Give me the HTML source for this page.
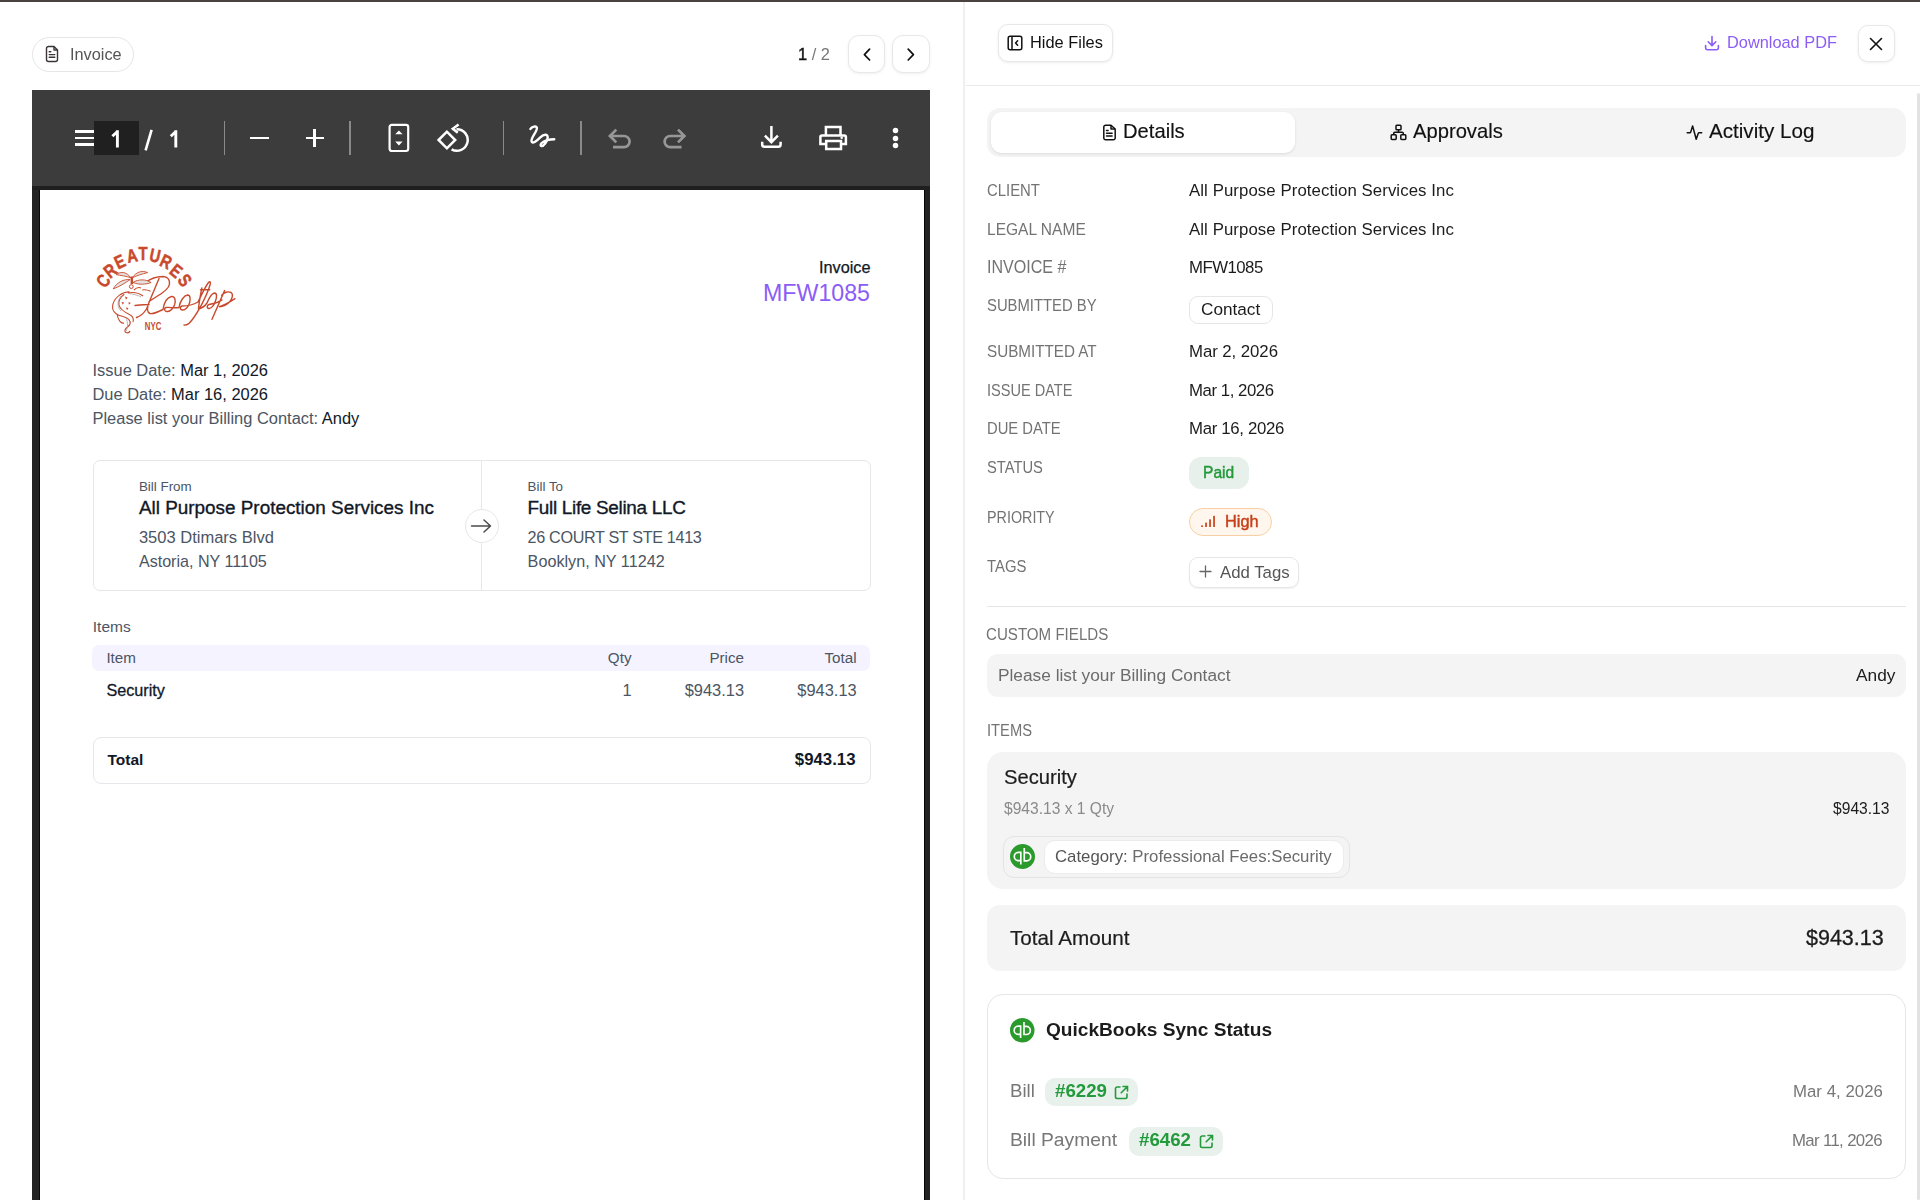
<!DOCTYPE html>
<html><head><meta charset="utf-8"><title>Invoice</title>
<style>
html,body{margin:0;padding:0;width:1920px;height:1200px;overflow:hidden;background:#fff;position:relative}
.t{position:absolute;white-space:nowrap;line-height:1;font-family:"Liberation Sans", sans-serif}
.r{position:absolute;display:block}
</style></head><body>
<div class="r" style="left:0px;top:0px;width:1920px;height:2px;background:#4a4240"></div>
<div class="r" style="left:963px;top:2px;width:2px;height:1198px;background:#eff0ef"></div>
<div class="r" style="left:32px;top:37px;width:102px;height:35px;border:1px solid #e6e6e6;border-radius:18px;box-sizing:border-box;background:#fff"></div>
<svg class="r" style="left:44px;top:45px;" width="16" height="18" viewBox="0 0 16 18" fill="none"><path d="M10 1.5H4.5a2 2 0 0 0-2 2v11a2 2 0 0 0 2 2h7a2 2 0 0 0 2-2V5z" stroke="#3b3535" stroke-width="1.4" stroke-linejoin="round"/><path d="M10 1.5V5h3.5" stroke="#3b3535" stroke-width="1.4" stroke-linejoin="round"/><path d="M5.2 6.8h1.6M5.2 9.6h5.6M5.2 12.3h5.6" stroke="#3b3535" stroke-width="1.4" stroke-linecap="round"/></svg>
<div class="t" style="top:46.00px;font-size:16.3px;color:#555;font-weight:400;left:69.50px;will-change:transform;">Invoice</div>
<div class="t" style="top:46.00px;font-size:16.4px;color:#777;font-weight:400;left:798.00px;will-change:transform;"><span style="color:#111;-webkit-text-stroke:0.4px #111">1</span> <span style="color:#777">/ 2</span></div>
<div class="r" style="left:847.5px;top:35px;width:37.5px;height:37.5px;border:1px solid #e8e8e8;border-radius:11px;box-sizing:border-box;background:#fff;box-shadow:0 1px 3px rgba(0,0,0,.06)"></div>
<div class="r" style="left:892px;top:35px;width:37.5px;height:37.5px;border:1px solid #e8e8e8;border-radius:11px;box-sizing:border-box;background:#fff;box-shadow:0 1px 3px rgba(0,0,0,.06)"></div>
<svg class="r" style="left:862px;top:47px;" width="10" height="15" viewBox="0 0 10 15" fill="none"><path d="M7.6 2.2 2.4 7.6 7.6 13" stroke="#111" stroke-width="1.7" stroke-linecap="round" stroke-linejoin="round"/></svg>
<svg class="r" style="left:906px;top:47px;" width="10" height="15" viewBox="0 0 10 15" fill="none"><path d="M2.2 2.2 7.4 7.6 2.2 13" stroke="#111" stroke-width="1.7" stroke-linecap="round" stroke-linejoin="round"/></svg>
<div class="r" style="left:32px;top:90px;width:898px;height:1110px;background:#232323"></div>
<div class="r" style="left:32px;top:90px;width:898px;height:96px;background:#3c3c3c"></div>
<div class="r" style="left:32px;top:186px;width:898px;height:4px;background:#1f1f1f"></div>
<div class="r" style="left:38.5px;top:190px;width:1.5px;height:1010px;background:#0a0a0a"></div>
<div class="r" style="left:924px;top:190px;width:1.2px;height:1010px;background:#050505"></div>
<div class="r" style="left:40px;top:190px;width:884px;height:1010px;background:#fff"></div>
<div class="r" style="left:74.7px;top:130px;width:19.5px;height:2.6px;background:#fff"></div>
<div class="r" style="left:74.7px;top:136.5px;width:19.5px;height:2.6px;background:#fff"></div>
<div class="r" style="left:74.7px;top:143px;width:19.5px;height:2.6px;background:#fff"></div>
<div class="r" style="left:94px;top:121px;width:45px;height:34px;background:#202020"></div>
<svg class="r" style="left:100px;top:120px;" width="90" height="36" viewBox="100 120 90 36" fill="none"><path d="M112.4 136.3 117.2 131.8M117.4 130.2V147.5M170.8 136.3 175.6 131.8M175.8 130.2V147.5" stroke="#fff" stroke-width="2.9" stroke-linecap="butt"/><path d="M145.6 150.3 151.6 129.9" stroke="#fff" stroke-width="2.6"/></svg>
<div class="r" style="left:223.5px;top:121px;width:1.6px;height:34px;background:#8a8a8a"></div>
<div class="r" style="left:349.3px;top:121px;width:1.6px;height:34px;background:#8a8a8a"></div>
<div class="r" style="left:502.6px;top:121px;width:1.6px;height:34px;background:#8a8a8a"></div>
<div class="r" style="left:580.3px;top:121px;width:1.6px;height:34px;background:#8a8a8a"></div>
<div class="r" style="left:250px;top:137px;width:18.5px;height:2.2px;background:#fff"></div>
<div class="r" style="left:305.5px;top:137px;width:18px;height:2.2px;background:#fff"></div>
<div class="r" style="left:313.4px;top:129.3px;width:2.2px;height:18px;background:#fff"></div>
<svg class="r" style="left:386px;top:122px;" width="26" height="32" viewBox="0 0 26 32" fill="none"><rect x="3.6" y="2.8" width="18.6" height="26.2" rx="2.2" stroke="#fff" stroke-width="2.2"/><path d="M9.2 12.2 12.9 8.4 16.6 12.2z M9.2 19.6 12.9 23.4 16.6 19.6z" fill="#fff"/></svg>
<svg class="r" style="left:436px;top:122px;" width="34" height="32" viewBox="0 0 34 32" fill="none"><path d="M2.6 18 10.9 9.7 19.2 18 10.9 26.3z" stroke="#fff" stroke-width="2.5" stroke-linejoin="miter"/><path d="M20.5 7.2A10.8 10.8 0 1 1 15.6 27.4" stroke="#fff" stroke-width="2.5" fill="none"/><path d="M22.6 2.6 16.8 6.8 21.8 10.8" stroke="#fff" stroke-width="2.5" fill="none"/></svg>
<svg class="r" style="left:528px;top:124px;" width="28" height="28" viewBox="0 0 28 28" fill="none"><path d="M2.4 5C3.6 2.6 8.6 1.2 8.9 4C9.3 7.2 3 13.6 3.5 17.2C4 20.8 9.6 16.2 12.6 13.2C15.6 10.2 19.8 9.6 19.7 13.2C19.6 17.4 15.2 23 13.2 22C11 20.9 14.6 15.6 26.2 15.3" stroke="#fff" stroke-width="2.4" stroke-linecap="round" stroke-linejoin="round" fill="none"/></svg>
<svg class="r" style="left:600px;top:118px;" width="100" height="40" viewBox="600 118 100 40" fill="none"><path d="M616.3 129.6 609.9 136 616.3 142.4M610.5 136H624A5.6 5.6 0 0 1 624 147.2H613" stroke="#979797" stroke-width="2.7" fill="none"/><path d="M678 129.6 684.4 136 678 142.4M683.8 136H670.2A5.6 5.6 0 0 0 670.2 147.2H681.5" stroke="#979797" stroke-width="2.7" fill="none"/></svg>
<svg class="r" style="left:759px;top:124px;" width="26" height="28" viewBox="0 0 26 28" fill="none"><path d="M12.4 1.9V18.2M5.9 11.7 12.4 18.2 18.9 11.7" stroke="#fff" stroke-width="2.5" fill="none"/><path d="M3.2 17.8v2.6a2.3 2.3 0 0 0 2.3 2.3h13.8a2.3 2.3 0 0 0 2.3-2.3v-2.6" stroke="#fff" stroke-width="2.5" fill="none"/></svg>
<svg class="r" style="left:817px;top:123px;" width="32" height="30" viewBox="0 0 32 30" fill="none"><path d="M8.9 12V4.1H23.5V12" stroke="#fff" stroke-width="2.5" fill="none"/><path d="M8.2 20.9H3.4V14a1.6 1.6 0 0 1 1.6-1.6H27.3a1.6 1.6 0 0 1 1.6 1.6v6.9H24.2" stroke="#fff" stroke-width="2.5" fill="none"/><rect x="9.2" y="18" width="14.8" height="8" stroke="#fff" stroke-width="2.5"/><circle cx="24.7" cy="14.8" r="1.3" fill="#fff"/></svg>
<svg class="r" style="left:892px;top:126.80000000000001px;" width="7" height="7" viewBox="0 0 7 7" fill="none"><circle cx="3.5" cy="3.5" r="2.75" fill="#fff"/></svg>
<svg class="r" style="left:892px;top:134.6px;" width="7" height="7" viewBox="0 0 7 7" fill="none"><circle cx="3.5" cy="3.5" r="2.75" fill="#fff"/></svg>
<svg class="r" style="left:892px;top:142.4px;" width="7" height="7" viewBox="0 0 7 7" fill="none"><circle cx="3.5" cy="3.5" r="2.75" fill="#fff"/></svg>
<svg class="r" style="left:85px;top:235px;" width="160" height="105" viewBox="85 235 160 105" fill="none">
<text x="0" y="0" transform="translate(103.5,281) rotate(-51.9) scale(0.8,1)" text-anchor="middle" dominant-baseline="central" font-family="Liberation Sans" font-weight="700" font-size="18.5" fill="#c9492c" stroke="#c9492c" stroke-width="0.5">C</text>
<text x="0" y="0" transform="translate(110.5,271) rotate(-38.4) scale(0.8,1)" text-anchor="middle" dominant-baseline="central" font-family="Liberation Sans" font-weight="700" font-size="18.5" fill="#c9492c" stroke="#c9492c" stroke-width="0.5">R</text>
<text x="0" y="0" transform="translate(120,262) rotate(-24.7) scale(0.8,1)" text-anchor="middle" dominant-baseline="central" font-family="Liberation Sans" font-weight="700" font-size="18.5" fill="#c9492c" stroke="#c9492c" stroke-width="0.5">E</text>
<text x="0" y="0" transform="translate(132,256) rotate(-11.1) scale(0.8,1)" text-anchor="middle" dominant-baseline="central" font-family="Liberation Sans" font-weight="700" font-size="18.5" fill="#c9492c" stroke="#c9492c" stroke-width="0.5">A</text>
<text x="0" y="0" transform="translate(143,254) rotate(0.0) scale(0.8,1)" text-anchor="middle" dominant-baseline="central" font-family="Liberation Sans" font-weight="700" font-size="18.5" fill="#c9492c" stroke="#c9492c" stroke-width="0.5">T</text>
<text x="0" y="0" transform="translate(155,256) rotate(12.1) scale(0.8,1)" text-anchor="middle" dominant-baseline="central" font-family="Liberation Sans" font-weight="700" font-size="18.5" fill="#c9492c" stroke="#c9492c" stroke-width="0.5">U</text>
<text x="0" y="0" transform="translate(166,262) rotate(24.7) scale(0.8,1)" text-anchor="middle" dominant-baseline="central" font-family="Liberation Sans" font-weight="700" font-size="18.5" fill="#c9492c" stroke="#c9492c" stroke-width="0.5">R</text>
<text x="0" y="0" transform="translate(176,271) rotate(38.8) scale(0.8,1)" text-anchor="middle" dominant-baseline="central" font-family="Liberation Sans" font-weight="700" font-size="18.5" fill="#c9492c" stroke="#c9492c" stroke-width="0.5">E</text>
<text x="0" y="0" transform="translate(184.5,280.5) rotate(52.8) scale(0.8,1)" text-anchor="middle" dominant-baseline="central" font-family="Liberation Sans" font-weight="700" font-size="18.5" fill="#c9492c" stroke="#c9492c" stroke-width="0.5">S</text>
<path d="M145.5 282.5 C 150 279, 157 276.5, 163 276.5 C 168 276.7, 170 280, 169.5 284 C 169 289, 162 293.5, 156 297 C 153 299, 150.5 300.5, 149 301.5 M159 278.5 C 156 286, 151 297, 148.5 304 C 147 308, 147 312, 150 313.5 C 153 314.5, 158 312, 163 309.5 M136.5 317.5 C 140 316.5, 144 313, 146.5 309 C 147.5 307, 148 305.5, 148.5 304 M135 305.5 C 140 305, 145 304.5, 149 304.5 M163 309.5 C 164 303, 167 297.5, 171.5 296.5 C 175 296, 176 300, 174.5 305 C 173 309.5, 169 312, 166.5 311.5 C 164 311, 164 308, 166 307.5 C 170 307, 175 308.5, 179 307.5 C 180 301, 184 295.5, 187.5 295 C 190.5 295, 190.5 299.5, 189.5 303 C 188.5 307, 185 310.5, 182 310 C 179.5 309.5, 180 306.5, 182 306 C 186 306, 193 305, 198 302 C 201 296, 205 287, 208.5 282.5 C 210 280.5, 211 282, 210 285 C 207 295, 199 311, 192 320 C 189 324, 186 325.5, 184 325 M200.5 289.8 H 209.7 M201.8 288 C 200.5 295, 199 302, 198.5 309 C 202 308, 205 306, 207 303 C 209 298, 212 293.5, 214.5 293 C 217 293, 217 297, 215.5 301 C 214 305.5, 211 309, 208.5 308.5 C 206.5 308, 207 305, 209 304.5 C 213 304, 217.5 303, 222 300 M224.6 290.6 L212 319.3 M221.7 295.2 C 224 292.5, 228 291, 231 292.5 C 233.5 294, 232.5 299, 229.5 302 C 226.5 305, 222 306.5, 219.4 306.7 C 224 305.5, 230 302, 234.9 298.7" stroke="#c9492c" stroke-width="1.4" fill="none" stroke-linecap="round" stroke-linejoin="round"/>
<text x="0" y="0" transform="translate(144.8,329.6) scale(0.76,1)" font-family="Liberation Sans" font-weight="700" font-size="10.3" fill="#c9492c">NYC</text>
<path d="M113.2 288.9 C 117 282, 124 279, 130.1 279.6 C 125 283, 119 287, 113.2 288.9 Z M116.1 274.6 C 121 271, 127 272, 130.7 277.8 C 126 276, 121 275.5, 116.1 274.6 Z M147.6 272.6 C 142 270, 136 272, 132.4 277.8 C 137 275.5, 142 274, 147.6 272.6 Z M133 282.5 C 138 279, 146 279, 151.1 282.5 C 146 284.5, 139 285, 133 282.5 Z" stroke="#c9492c" stroke-width="0.9" fill="#e4e0de"/>
<path d="M129.5 291.8 C 122 292, 115 297, 113 304 C 111 311, 116 315, 123 316.5 C 128 318, 131 320, 130 324 C 129 327, 126 327, 125 330 C 124 333, 129 334, 130 331 M124.3 294.2 C 120 297, 118 302, 119 305 C 120 310, 126 313, 130.7 315.2 C 133 317, 134 319, 133 322 M117 314 C 118 320, 121 324, 124 323 M128 293 C 133 292, 139 293, 143 296 M142.3 290 C 145 289.5, 148 290, 150.5 291.3 M134 290 C 136 288, 139 287, 141 288" stroke="#c9492c" stroke-width="1.1" fill="none"/>
<path d="M131.8 276.5V284" stroke="#c9492c" stroke-width="2.4"/>
<circle cx="131.3" cy="286.6" r="1.9" stroke="#c9492c" stroke-width="1" fill="none"/>
<path d="M125 296.5 l2.6 1 l-1.6 2.2z M121.5 302 l2.6 0.5 l-1.3 2.3z M128.5 302 l2.3 1 l-1.9 1.7z M126 307.5 l2.5 0.6 l-1.5 2.1z" fill="#c9492c"/>
<path d="M121 296 C 117 301, 117 307, 121 311 M126 318 C 128 322, 128 328, 126 331 M129 293.5 C 134 294.5, 138 295, 141 297" stroke="#a9a4a2" stroke-width="0.8" fill="none"/>
</svg>
<div class="t" style="top:259.00px;font-size:16.25px;color:#111827;font-weight:400;right:1049.50px;-webkit-text-stroke:0.25px #111827;">Invoice</div>
<div class="t" style="top:282.00px;font-size:23.2px;color:#8b5cf6;font-weight:400;right:1050.00px;">MFW1085</div>
<div class="t" style="top:362.00px;font-size:16.45px;color:#111;font-weight:400;left:92.50px;"><span style="color:#4b5563">Issue Date:</span> <span style="color:#111827">Mar 1, 2026</span></div>
<div class="t" style="top:386.00px;font-size:16.45px;color:#111;font-weight:400;left:92.50px;"><span style="color:#4b5563">Due Date:</span> <span style="color:#111827">Mar 16, 2026</span></div>
<div class="t" style="top:410.00px;font-size:16.45px;color:#111;font-weight:400;left:92.50px;"><span style="color:#4b5563">Please list your Billing Contact:</span> <span style="color:#111827">Andy</span></div>
<div class="r" style="left:93px;top:460px;width:777.5px;height:130.5px;border:1px solid #e5e7eb;border-radius:7px;box-sizing:border-box"></div>
<div class="r" style="left:481px;top:461px;width:1.2px;height:129px;background:#e5e7eb"></div>
<div class="r" style="left:464.5px;top:509px;width:34px;height:34px;border:1px solid #e5e7eb;border-radius:50%;box-sizing:border-box;background:#fff"></div>
<svg class="r" style="left:470px;top:518px;" width="23" height="16" viewBox="0 0 23 16" fill="none"><path d="M1.5 8h19M14 2l6.5 6-6.5 6" stroke="#4b4b4b" stroke-width="1.5" fill="none" stroke-linecap="round" stroke-linejoin="round"/></svg>
<div class="t" style="top:480.00px;font-size:13.4px;color:#4b5563;font-weight:400;left:138.90px;">Bill From</div>
<div class="t" style="top:499.00px;font-size:18.9px;color:#111827;font-weight:400;left:138.90px;-webkit-text-stroke:0.35px #111827;">All Purpose Protection Services Inc</div>
<div class="t" style="top:530.00px;font-size:16.52px;color:#4b5563;font-weight:400;left:138.90px;">3503 Dtimars Blvd</div>
<div class="t" style="top:553.00px;font-size:16.1px;color:#4b5563;font-weight:400;left:138.90px;">Astoria, NY 11105</div>
<div class="t" style="top:480.00px;font-size:13.4px;color:#4b5563;font-weight:400;left:527.60px;">Bill To</div>
<div class="t" style="top:499.00px;font-size:18.9px;color:#111827;font-weight:400;left:527.60px;-webkit-text-stroke:0.35px #111827;letter-spacing:-0.295px;">Full Life Selina LLC</div>
<div class="t" style="top:529.00px;font-size:16.2px;color:#4b5563;font-weight:400;left:527.60px;letter-spacing:-0.349px;">26 COURT ST STE 1413</div>
<div class="t" style="top:553.00px;font-size:16.2px;color:#4b5563;font-weight:400;left:527.60px;">Booklyn, NY 11242</div>
<div class="t" style="top:619.00px;font-size:15.5px;color:#4b5563;font-weight:400;left:92.80px;">Items</div>
<div class="r" style="left:92px;top:644.5px;width:778.3px;height:26.5px;background:#f5f3ff;border-radius:7px"></div>
<div class="t" style="top:650.00px;font-size:15.2px;color:#4b5563;font-weight:400;left:106.40px;">Item</div>
<div class="t" style="top:650.00px;font-size:15.2px;color:#4b5563;font-weight:400;right:1288.50px;">Qty</div>
<div class="t" style="top:650.00px;font-size:15.2px;color:#4b5563;font-weight:400;right:1176.00px;">Price</div>
<div class="t" style="top:650.00px;font-size:15.2px;color:#4b5563;font-weight:400;right:1063.40px;">Total</div>
<div class="t" style="top:682.00px;font-size:16.2px;color:#111827;font-weight:400;left:106.40px;-webkit-text-stroke:0.3px #111827;">Security</div>
<div class="t" style="top:682.00px;font-size:16.4px;color:#4b5563;font-weight:400;right:1288.50px;">1</div>
<div class="t" style="top:682.00px;font-size:16.4px;color:#4b5563;font-weight:400;right:1176.00px;">$943.13</div>
<div class="t" style="top:682.00px;font-size:16.4px;color:#4b5563;font-weight:400;right:1063.40px;">$943.13</div>
<div class="r" style="left:93px;top:736.5px;width:777.5px;height:47.5px;border:1px solid #e5e7eb;border-radius:8px;box-sizing:border-box"></div>
<div class="t" style="top:752.00px;font-size:15.5px;color:#111827;font-weight:700;left:107.50px;">Total</div>
<div class="t" style="top:752.00px;font-size:16.8px;color:#111827;font-weight:700;right:1064.50px;">$943.13</div>
<div class="r" style="left:965px;top:84.5px;width:955px;height:1.2px;background:#ececec"></div>
<div class="r" style="left:998.4px;top:24.1px;width:115px;height:37.6px;border:1px solid #e8e8e8;border-radius:10px;box-sizing:border-box;background:#fff;box-shadow:0 1px 3px rgba(0,0,0,.07)"></div>
<svg class="r" style="left:1007px;top:35px;" width="16" height="16" viewBox="0 0 16 16" fill="none"><rect x="1.2" y="1.2" width="13.6" height="13.6" rx="2" stroke="#111" stroke-width="1.5"/><path d="M5 1.2v13.6" stroke="#111" stroke-width="1.5"/><path d="M10.6 5.8 8.6 8l2 2.2" stroke="#111" stroke-width="1.5" stroke-linecap="round" stroke-linejoin="round"/></svg>
<div class="t" style="top:34.00px;font-size:16.4px;color:#111;font-weight:400;left:1029.80px;will-change:transform;">Hide Files</div>
<svg class="r" style="left:1704px;top:35px;" width="16" height="16" viewBox="0 0 16 16" fill="none"><path d="M8 1.5v9M4.2 6.8 8 10.6l3.8-3.8" stroke="#8b5cf6" stroke-width="1.6" fill="none" stroke-linecap="round" stroke-linejoin="round"/><path d="M1.6 10.5v2.6a1.6 1.6 0 0 0 1.6 1.6h9.6a1.6 1.6 0 0 0 1.6-1.6v-2.6" stroke="#8b5cf6" stroke-width="1.6" fill="none" stroke-linecap="round"/></svg>
<div class="t" style="top:34.00px;font-size:16.35px;color:#8b5cf6;font-weight:400;left:1726.70px;will-change:transform;">Download PDF</div>
<div class="r" style="left:1858px;top:24.7px;width:37.2px;height:37px;border:1px solid #e8e8e8;border-radius:10px;box-sizing:border-box;background:#fff;box-shadow:0 1px 3px rgba(0,0,0,.07)"></div>
<svg class="r" style="left:1869px;top:36.5px;" width="14" height="14" viewBox="0 0 14 14" fill="none"><path d="M1.5 1.5l11 11M12.5 1.5l-11 11" stroke="#111" stroke-width="1.6" stroke-linecap="round"/></svg>
<div class="r" style="left:1917px;top:93px;width:3px;height:1107px;background:#e2e2e2;border-radius:2px"></div>
<div class="r" style="left:986.5px;top:107.5px;width:919.5px;height:49.5px;background:#f4f4f4;border-radius:13px"></div>
<div class="r" style="left:991px;top:112px;width:303.6px;height:41px;background:#fff;border-radius:11px;box-shadow:0 1px 3px rgba(0,0,0,.1)"></div>
<svg class="r" style="left:1101.5px;top:124px;" width="15" height="17" viewBox="0 0 15 17" fill="none"><path d="M9 1.2H3.6A1.8 1.8 0 0 0 1.8 3v11a1.8 1.8 0 0 0 1.8 1.8h7.8a1.8 1.8 0 0 0 1.8-1.8V5z" stroke="#111" stroke-width="1.5" stroke-linejoin="round"/><path d="M9 1.2V5h4" stroke="#111" stroke-width="1.5" stroke-linejoin="round"/><path d="M4.5 6.5h1.6M4.5 9.2h5.6M4.5 11.9h5.6" stroke="#111" stroke-width="1.5" stroke-linecap="round"/></svg>
<div class="t" style="top:121.00px;font-size:20.2px;color:#111;font-weight:400;left:1123.40px;will-change:transform;-webkit-text-stroke:0.15px #111;">Details</div>
<svg class="r" style="left:1390px;top:124px;" width="17" height="17" viewBox="0 0 17 17" fill="none"><rect x="6" y="1.2" width="5" height="4.6" rx=".8" stroke="#111" stroke-width="1.5"/><rect x="1.2" y="10.8" width="5" height="4.6" rx=".8" stroke="#111" stroke-width="1.5"/><rect x="10.8" y="10.8" width="5" height="4.6" rx=".8" stroke="#111" stroke-width="1.5"/><path d="M3.7 10.8V9.4a1.2 1.2 0 0 1 1.2-1.2h7.2a1.2 1.2 0 0 1 1.2 1.2v1.4M8.5 5.8v2.4" stroke="#111" stroke-width="1.5"/></svg>
<div class="t" style="top:121.00px;font-size:20.2px;color:#111;font-weight:400;left:1413.20px;will-change:transform;-webkit-text-stroke:0.15px #111;">Approvals</div>
<svg class="r" style="left:1685.5px;top:124px;" width="17" height="17" viewBox="0 0 17 17" fill="none"><path d="M1.2 8.8h2.6c.4 0 .8-.3.9-.7L6.6 1.9 10.2 15.2 12.2 9.4c.1-.4.5-.6.9-.6h2.6" stroke="#111" stroke-width="1.5" stroke-linecap="round" stroke-linejoin="round" fill="none"/></svg>
<div class="t" style="top:121.00px;font-size:20.61px;color:#111;font-weight:400;left:1708.60px;will-change:transform;-webkit-text-stroke:0.15px #111;">Activity Log</div>
<div class="t" style="top:184.00px;font-size:14.9px;color:#737373;font-weight:400;left:986.50px;transform-origin:0 12.00px;transform:scaleY(1.12);will-change:transform;">CLIENT</div>
<div class="t" style="top:183.00px;font-size:16.8px;color:#1c1c1c;font-weight:400;left:1189.00px;will-change:transform;letter-spacing:0.080px;">All Purpose Protection Services Inc</div>
<div class="t" style="top:222.00px;font-size:15.55px;color:#737373;font-weight:400;left:986.50px;transform-origin:0 13.00px;transform:scaleY(1.12);will-change:transform;">LEGAL NAME</div>
<div class="t" style="top:222.00px;font-size:16.8px;color:#1c1c1c;font-weight:400;left:1189.00px;will-change:transform;letter-spacing:0.080px;">All Purpose Protection Services Inc</div>
<div class="t" style="top:259.00px;font-size:16.07px;color:#737373;font-weight:400;left:986.50px;transform-origin:0 14.00px;transform:scaleY(1.12);will-change:transform;">INVOICE #</div>
<div class="t" style="top:260.00px;font-size:16.8px;color:#1c1c1c;font-weight:400;left:1189.00px;will-change:transform;letter-spacing:-0.527px;">MFW1085</div>
<div class="t" style="top:299.00px;font-size:14.84px;color:#737373;font-weight:400;left:986.50px;transform-origin:0 12.00px;transform:scaleY(1.12);will-change:transform;">SUBMITTED BY</div>
<div class="t" style="top:344.00px;font-size:15.23px;color:#737373;font-weight:400;left:986.50px;transform-origin:0 13.00px;transform:scaleY(1.12);will-change:transform;">SUBMITTED AT</div>
<div class="t" style="top:344.00px;font-size:16.8px;color:#1c1c1c;font-weight:400;left:1189.00px;will-change:transform;letter-spacing:-0.059px;">Mar 2, 2026</div>
<div class="t" style="top:384.00px;font-size:14.56px;color:#737373;font-weight:400;left:986.50px;transform-origin:0 12.00px;transform:scaleY(1.12);will-change:transform;">ISSUE DATE</div>
<div class="t" style="top:383.00px;font-size:16.8px;color:#1c1c1c;font-weight:400;left:1189.00px;will-change:transform;letter-spacing:-0.450px;">Mar 1, 2026</div>
<div class="t" style="top:422.00px;font-size:14.81px;color:#737373;font-weight:400;left:986.50px;transform-origin:0 12.00px;transform:scaleY(1.12);will-change:transform;">DUE DATE</div>
<div class="t" style="top:421.00px;font-size:16.8px;color:#1c1c1c;font-weight:400;left:1189.00px;will-change:transform;letter-spacing:-0.316px;">Mar 16, 2026</div>
<div class="t" style="top:461.00px;font-size:14.72px;color:#737373;font-weight:400;left:986.50px;transform-origin:0 12.00px;transform:scaleY(1.12);will-change:transform;">STATUS</div>
<div class="t" style="top:511.00px;font-size:14.33px;color:#737373;font-weight:400;left:986.50px;transform-origin:0 12.00px;transform:scaleY(1.12);will-change:transform;">PRIORITY</div>
<div class="t" style="top:560.00px;font-size:14.88px;color:#737373;font-weight:400;left:986.50px;transform-origin:0 12.00px;transform:scaleY(1.12);will-change:transform;">TAGS</div>
<div class="r" style="left:1188.8px;top:295.5px;width:84px;height:28px;border:1px solid #e6e6e6;border-radius:9px;box-sizing:border-box;background:#fff"></div>
<div class="t" style="top:301.00px;font-size:17.2px;color:#1c1c1c;font-weight:400;left:1200.80px;will-change:transform;">Contact</div>
<div class="r" style="left:1188.6px;top:457px;width:60px;height:32.3px;background:#e8f0eb;border-radius:12px"></div>
<div class="t" style="top:465.00px;font-size:15.59px;color:#239a3b;font-weight:400;left:1202.80px;will-change:transform;-webkit-text-stroke:0.45px #239a3b;">Paid</div>
<div class="r" style="left:1188.6px;top:507.6px;width:83px;height:28.4px;background:#fff7ed;border:1px solid #f8cfa3;border-radius:14px;box-sizing:border-box"></div>
<svg class="r" style="left:1200px;top:513px;" width="18" height="16" viewBox="0 0 18 16" fill="none"><rect x="1.2" y="12.2" width="1.7" height="1.8" rx=".5" fill="#c7401a"/><rect x="5.2" y="9.5" width="1.7" height="4.5" rx=".5" fill="#c7401a"/><rect x="9.2" y="6.2" width="1.7" height="7.8" rx=".5" fill="#c7401a"/><rect x="13.2" y="2.8" width="1.7" height="11.2" rx=".5" fill="#c7401a"/></svg>
<div class="t" style="top:513.00px;font-size:16.34px;color:#c7401a;font-weight:400;left:1225.30px;will-change:transform;-webkit-text-stroke:0.45px #c7401a;">High</div>
<div class="r" style="left:1188.6px;top:556.6px;width:110.5px;height:31.5px;border:1px solid #e6e6e6;border-radius:9px;box-sizing:border-box;background:#fff;box-shadow:0 1px 2px rgba(0,0,0,.06)"></div>
<svg class="r" style="left:1198px;top:564px;" width="15" height="15" viewBox="0 0 15 15" fill="none"><path d="M7.5 2v11M2 7.5h11" stroke="#666" stroke-width="1.3" stroke-linecap="round"/></svg>
<div class="t" style="top:565.00px;font-size:16.8px;color:#555;font-weight:400;left:1220.00px;will-change:transform;">Add Tags</div>
<div class="r" style="left:987px;top:605.5px;width:919px;height:1.5px;background:#e5e5e5"></div>
<div class="t" style="top:627.00px;font-size:15.12px;color:#737373;font-weight:400;left:986.30px;transform-origin:0 13.00px;transform:scaleY(1.12);will-change:transform;">CUSTOM FIELDS</div>
<div class="r" style="left:986.7px;top:653.5px;width:919.3px;height:43.2px;background:#f4f4f4;border-radius:11px"></div>
<div class="t" style="top:667.00px;font-size:17.3px;color:#6b6b6b;font-weight:400;left:998.30px;will-change:transform;">Please list your Billing Contact</div>
<div class="t" style="top:667.00px;font-size:17.3px;color:#1c1c1c;font-weight:400;right:25.00px;will-change:transform;">Andy</div>
<div class="t" style="top:724.00px;font-size:14.73px;color:#737373;font-weight:400;left:986.50px;transform-origin:0 12.00px;transform:scaleY(1.12);will-change:transform;">ITEMS</div>
<div class="r" style="left:987px;top:752.4px;width:919px;height:136.2px;background:#f4f4f4;border-radius:16px"></div>
<div class="t" style="top:767.00px;font-size:20.21px;color:#1c1c1c;font-weight:400;left:1003.80px;will-change:transform;-webkit-text-stroke:0.2px #1c1c1c;">Security</div>
<div class="t" style="top:801.00px;font-size:15.6px;color:#8a8a8a;font-weight:400;left:1003.80px;will-change:transform;">$943.13 x 1 Qty</div>
<div class="t" style="top:801.00px;font-size:15.63px;color:#1c1c1c;font-weight:400;right:31.00px;will-change:transform;">$943.13</div>
<div class="r" style="left:1003.4px;top:835.5px;width:346.5px;height:42.2px;border:1px solid #e4e4e4;border-radius:11px;box-sizing:border-box"></div>
<svg class="r" style="left:1009.7px;top:843.8px;" width="25" height="25" viewBox="0 0 24 24" fill="none"><circle cx="12" cy="12" r="12" fill="#2a9a2c"/><path d="M10.4 8 H8.1 a4 4 0 0 0 0 8 H10.4 M10.4 7.2 V19.6 M13.7 16.2 H15.9 a4 4 0 0 0 0 -8 H13.7 M13.7 3.9 V17" stroke="#fff" stroke-width="1.6" fill="none"/></svg>
<div class="r" style="left:1043.8px;top:840px;width:300.2px;height:33.8px;background:#fff;border:1px solid #ececec;border-radius:11px;box-sizing:border-box"></div>
<div class="t" style="top:849.00px;font-size:16.78px;color:#6b6b6b;font-weight:400;left:1055.20px;will-change:transform;"><span style="color:#555">Category:</span> Professional Fees:Security</div>
<div class="r" style="left:986.7px;top:905px;width:919.3px;height:65.8px;background:#f4f4f4;border-radius:13px"></div>
<div class="t" style="top:928.00px;font-size:20.67px;color:#1c1c1c;font-weight:400;left:1009.70px;will-change:transform;-webkit-text-stroke:0.2px #1c1c1c;">Total Amount</div>
<div class="t" style="top:928.00px;font-size:21.5px;color:#1c1c1c;font-weight:400;right:36.50px;will-change:transform;-webkit-text-stroke:0.3px #1c1c1c;">$943.13</div>
<div class="r" style="left:987px;top:994.2px;width:918.7px;height:185px;border:1px solid #e6e6e6;border-radius:16px;box-sizing:border-box"></div>
<svg class="r" style="left:1010px;top:1018px;" width="24.5" height="24.5" viewBox="0 0 24 24" fill="none"><circle cx="12" cy="12" r="12" fill="#2a9a2c"/><path d="M10.4 8 H8.1 a4 4 0 0 0 0 8 H10.4 M10.4 7.2 V19.6 M13.7 16.2 H15.9 a4 4 0 0 0 0 -8 H13.7 M13.7 3.9 V17" stroke="#fff" stroke-width="1.6" fill="none"/></svg>
<div class="t" style="top:1020.00px;font-size:19.1px;color:#1c1c1c;font-weight:700;left:1045.80px;will-change:transform;">QuickBooks Sync Status</div>
<div class="t" style="top:1082.00px;font-size:18.6px;color:#777;font-weight:400;left:1009.80px;will-change:transform;">Bill</div>
<div class="r" style="left:1045.1px;top:1077.6px;width:93px;height:28.6px;background:#e9f1ec;border-radius:10px"></div>
<div class="t" style="top:1082.00px;font-size:18.7px;color:#239a3b;font-weight:700;left:1054.90px;will-change:transform;">#6229</div>
<svg class="r" style="left:1114.3px;top:1084.8px;" width="15" height="15" viewBox="0 0 15 15" fill="none"><path d="M6.5 2H3.2A1.7 1.7 0 0 0 1.5 3.7v8.1a1.7 1.7 0 0 0 1.7 1.7h8.1a1.7 1.7 0 0 0 1.7-1.7V8.5" stroke="#239a3b" stroke-width="1.6" fill="none"/><path d="M9 1.5h4.5V6M13.5 1.5 7.2 7.8" stroke="#239a3b" stroke-width="1.6" fill="none" stroke-linecap="round"/></svg>
<div class="t" style="top:1130.00px;font-size:19.25px;color:#777;font-weight:400;left:1009.80px;will-change:transform;">Bill Payment</div>
<div class="r" style="left:1129.1px;top:1127.4px;width:94.4px;height:29px;background:#e9f1ec;border-radius:10px"></div>
<div class="t" style="top:1131.00px;font-size:18.7px;color:#239a3b;font-weight:700;left:1138.90px;will-change:transform;">#6462</div>
<svg class="r" style="left:1198.6px;top:1134.2px;" width="15" height="15" viewBox="0 0 15 15" fill="none"><path d="M6.5 2H3.2A1.7 1.7 0 0 0 1.5 3.7v8.1a1.7 1.7 0 0 0 1.7 1.7h8.1a1.7 1.7 0 0 0 1.7-1.7V8.5" stroke="#239a3b" stroke-width="1.6" fill="none"/><path d="M9 1.5h4.5V6M13.5 1.5 7.2 7.8" stroke="#239a3b" stroke-width="1.6" fill="none" stroke-linecap="round"/></svg>
<div class="t" style="top:1084.00px;font-size:16.8px;color:#777;font-weight:400;right:37.00px;will-change:transform;letter-spacing:0.031px;margin-right:-0.031px;">Mar 4, 2026</div>
<div class="t" style="top:1133.00px;font-size:16.8px;color:#777;font-weight:400;right:37.00px;will-change:transform;letter-spacing:-0.646px;margin-right:0.646px;">Mar 11, 2026</div>
</body></html>
